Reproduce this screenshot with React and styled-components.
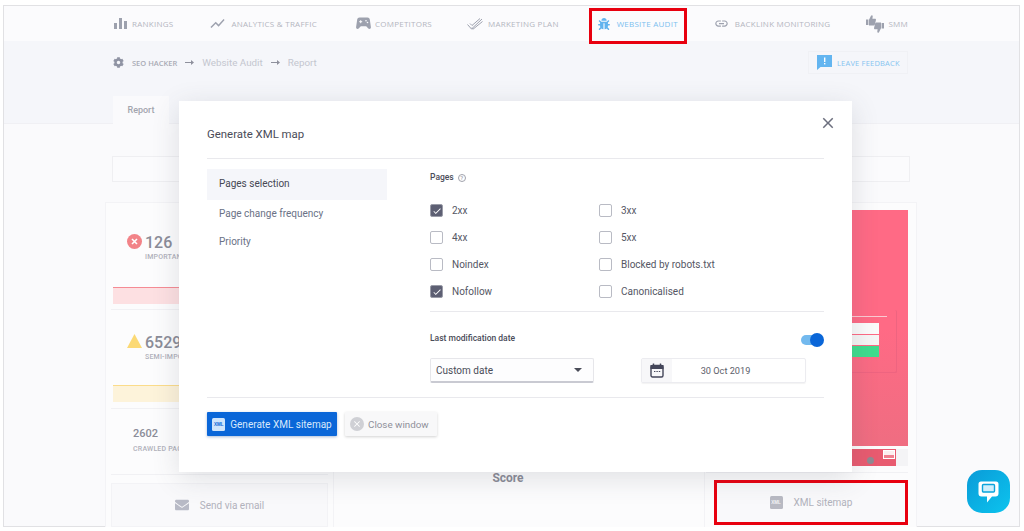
import React from "react";
import styled, { createGlobalStyle } from "styled-components";
import { FaBug, FaCog, FaEnvelope } from "react-icons/fa";
import { MdLink, MdShowChart, MdClose, MdCheck } from "react-icons/md";

const Global = createGlobalStyle`
  html, body { margin: 0; padding: 0; background: #fff; overflow: hidden; }
  * { box-sizing: border-box; }
  body { font-family: Roboto, "Liberation Sans", sans-serif; }
`;

const Page = styled.div`
  position: relative;
  width: 1024px;
  height: 531px;
  padding: 5px 4px 4px 3px;
  overflow: hidden;
  background: #fff;
`;
const Frame = styled.div`
  height: 100%;
  display: flex;
  flex-direction: column;
  border: 1px solid #e1e1e4;
  background: #fafafc;
`;
const Nav = styled.nav`
  height: 35px;
  flex: none;
  display: flex;
  align-items: center;
  padding-left: 110px;
  background: #fbfbfd;
`;
const NavItem = styled.div`
  position: relative;
  display: flex;
  align-items: center;
  margin-left: ${p => p.$ml ?? 0}px;
  gap: ${p => p.$gap ?? 5}px;
  font-family: "Open Sans", sans-serif;
  font-size: 8px;
  letter-spacing: 0.25px;
  color: ${p => (p.$active ? "#7cc0ef" : "#b4b6bf")};
  white-space: nowrap;
  svg { color: ${p => (p.$active ? "#62b3ee" : "#9da1ae")}; flex: none; }
`;
const RedBox = styled.div`
  position: absolute;
  z-index: 2;
  left: -9px;
  top: -10px;
  width: 98px;
  height: 36px;
  border: 3px solid #e8000f;
`;
const SubHeader = styled.div`
  height: 83px;
  flex: none;
  position: relative;
  background: #f5f6fa;
  border-bottom: 1px solid #f0f0f4;
  padding: 10px 111px 0 109px;
  display: flex;
  flex-direction: column;
`;
const CrumbRow = styled.div`
  height: 23px;
  display: flex;
  align-items: center;
  justify-content: space-between;
`;
const Crumbs = styled.div`
  display: flex;
  align-items: center;
  color: #c4c6cf;
  font-size: 9.8px;
  svg { flex: none; }
`;
const CrumbRoot = styled.span`
  margin-left: 8px;
  font-family: "Open Sans", sans-serif;
  font-size: 7.5px;
  font-weight: 600;
  color: #a9abb5;
`;
const ArrowWrap = styled.span`
  display: inline-flex;
  margin: 0 8px;
  color: #8e909c;
`;
const Feedback = styled.div`
  width: 100px;
  height: 23px;
  display: flex;
  align-items: center;
  gap: 5px;
  padding-left: 8px;
  border: 1px solid #f0f1f5;
  font-family: "Open Sans", sans-serif;
  font-size: 7.5px;
  letter-spacing: 0.2px;
  color: #86c4f0;
  white-space: nowrap;
`;
const Tab = styled.div`
  position: absolute;
  left: 109px;
  bottom: -1px;
  width: 56px;
  height: 28px;
  display: flex;
  align-items: center;
  justify-content: center;
  background: #fafafc;
  color: #a3a5ae;
  font-size: 9px;
  font-weight: 500;
`;
const Content = styled.div`
  flex: 1;
  min-height: 0;
  display: flex;
  flex-direction: column;
  padding: 32px 109px 0 108px;
`;
const SearchBox = styled.div`
  height: 26px;
  flex: none;
  border: 1px solid #efeff2;
  background: #fbfbfd;
`;
const Card = styled.div`
  flex: 1;
  margin: 20px -7px 0 -7px;
  display: grid;
  grid-template-columns: 228px 1fr 211px;
  background: #fcfcfd;
  border: 1px solid #f3f3f6;
  border-bottom: 0;
`;
const LeftCol = styled.div`
  display: flex;
  flex-direction: column;
  padding: 0 5px;
  border-right: 1px solid #f3f3f6;
`;
const Stat = styled.div`
  height: ${p => p.$h}px;
  flex: none;
  padding: ${p => p.$top}px 0 0 ${p => p.$left}px;
  border-bottom: 1px solid #f1f1f4;
`;
const StatHead = styled.div`
  display: flex;
  align-items: flex-start;
  gap: 3px;
`;
const Num = styled.div`
  font-size: ${p => p.$size ?? 16}px;
  line-height: ${p => p.$lh ?? 18}px;
  font-weight: 500;
  color: #8b8c98;
`;
const Label = styled.div`
  margin-top: ${p => p.$mt ?? 1}px;
  font-size: 7px;
  line-height: 9px;
  font-weight: 500;
  letter-spacing: 0.2px;
  color: #b0b1bb;
  white-space: nowrap;
`;
const Bar = styled.div`
  height: 17px;
  margin: ${p => p.$mt}px 0 0 ${p => -p.$left + 2}px;
  border-top: 1px solid ${p => p.$line};
  background: ${p => p.$fill};
`;
const Action = styled.div`
  margin-top: 8px;
  height: 44px;
  display: flex;
  align-items: center;
  justify-content: center;
  gap: 11px;
  color: #b1b2bb;
  font-size: 10px;
  border: 1px solid #f3f3f6;
  background: #f9f9fb;
  svg { color: #b8bac6; flex: none; }
`;
const MidCol = styled.div`
  display: flex;
  justify-content: center;
  padding: 268px 22px 0 0;
  color: #8b8c98;
  font-size: 12px;
  font-weight: 700;
  border-right: 1px solid #f3f3f6;
`;
const RightCol = styled.div`
  display: flex;
  flex-direction: column;
  padding: 7px 8px 0 1px;
`;
const Shot = styled.div`
  position: relative;
  height: 236px;
  flex: none;
  background: linear-gradient(180deg, #ff6a85 0%, #ff6a85 50%, #ef6d81 100%);
`;
const ShotForm = styled.div`
  position: absolute;
  left: 80px;
  right: 11px;
  top: 100px;
  height: 63px;
  border-right: 1px solid #ee6480;
  border-bottom: 1px solid #ee6480;
  border-radius: 2px;
`;
const ShotCaption = styled.div`
  position: absolute;
  left: 0;
  right: 9px;
  top: 6px;
  height: 1px;
  background: #fbc9d2;
`;
const ShotField = styled.div`
  position: absolute;
  left: 0;
  right: 17px;
  top: ${p => p.$top}px;
  height: ${p => p.$h}px;
  background: ${p => p.$c};
`;
const ThumbRow = styled.div`
  height: 17px;
  flex: none;
  margin-top: 3px;
  padding-right: 12px;
  background: #f4f4f6;
`;
const Thumb = styled.div`
  position: relative;
  height: 100%;
  background: #e85b70;
`;
const ThumbIcon = styled.div`
  position: absolute;
  right: 1px;
  top: 1px;
  width: 12px;
  height: 9px;
  background: linear-gradient(180deg, #fbeff0 55%, #f0808f 55%);
  border: 1px solid #fff;
`;
const ThumbDot = styled.div`
  position: absolute;
  right: 22px;
  bottom: 2px;
  width: 7px;
  height: 7px;
  border-radius: 50%;
  background: #8f8a92;
`;
const RightDivider = styled.div`
  height: 1px;
  flex: none;
  margin-top: 6px;
  background: #f1f1f4;
`;
const XmlBox = styled.div`
  position: relative;
  height: 45px;
  flex: none;
  margin: 7px 0 0 8px;
  display: flex;
  align-items: center;
  justify-content: center;
  gap: 11px;
  color: #b1b2bb;
  font-size: 10px;
  background: #f9f9fb;
  border: 3px solid #e8000f;
`;
const XmlTag = styled.span`
  display: inline-flex;
  align-items: center;
  justify-content: center;
  width: ${p => p.$w}px;
  height: ${p => p.$w}px;
  border-radius: 1.5px;
  background: ${p => p.$bg};
  color: ${p => p.$fg};
  font-family: "Liberation Sans", sans-serif;
  font-size: 4.5px;
  font-weight: 700;
  flex: none;
`;

const Modal = styled.div`
  position: absolute;
  left: 179px;
  top: 101px;
  width: 673px;
  height: 371px;
  padding: 0 28px;
  background: #fff;
  box-shadow: 0 6px 26px rgba(70, 72, 90, 0.16);
  display: flex;
  flex-direction: column;
`;
const CloseBtn = styled.div`
  position: absolute;
  right: 15px;
  top: 13px;
  color: #6c6f7e;
  line-height: 0;
`;
const Title = styled.div`
  height: 58px;
  flex: none;
  padding-top: 26px;
  font-size: 11.4px;
  line-height: 14px;
  color: #4a4c58;
  border-bottom: 1px solid #e9e9ed;
`;
const ModalBody = styled.div`
  height: 239px;
  flex: none;
  display: grid;
  grid-template-columns: 180px 1fr;
  column-gap: 43px;
  border-bottom: 1px solid #e9e9ed;
`;
const SideMenu = styled.div`
  padding-top: 10px;
`;
const SideItem = styled.div`
  height: ${p => p.$h}px;
  padding: 0 0 2px 12px;
  display: flex;
  align-items: center;
  font-size: 10px;
  color: ${p => (p.$active ? "#464854" : "#6a7186")};
  background: ${p => (p.$active ? "#f5f6fa" : "transparent")};
`;
const Pane = styled.div`
  display: flex;
  flex-direction: column;
`;
const SectionHead = styled.div`
  height: 38px;
  flex: none;
  padding-top: 13px;
  display: flex;
  align-items: flex-start;
  gap: 4px;
  font-size: 8.5px;
  line-height: 11px;
  font-weight: 500;
  color: #4a4c58;
`;
const Help = styled.span`
  width: 8px;
  height: 8px;
  margin-top: 1.5px;
  border: 1px solid #a0a2ac;
  border-radius: 50%;
  color: #a0a2ac;
  font-size: 6px;
  line-height: 6px;
  text-align: center;
`;
const CheckGrid = styled.div`
  display: grid;
  grid-template-columns: 169px 1fr;
  grid-auto-rows: 27px;
  height: 115px;
  flex: none;
  border-bottom: 1px solid #e9e9ed;
`;
const CheckRow = styled.label`
  display: flex;
  align-items: center;
  gap: 9px;
  font-size: 10px;
  color: #555764;
`;
const Box = styled.span`
  width: 13px;
  height: 13px;
  flex: none;
  display: inline-flex;
  align-items: center;
  justify-content: center;
  border: 1px solid ${p => (p.$on ? "#9a9ca8" : "#b9bbc4")};
  border-radius: 2px;
  background: ${p => (p.$on ? "#5d5f73" : "#fff")};
  color: #fff;
`;
const DateHead = styled.div`
  height: 46px;
  flex: none;
  position: relative;
  padding-top: 21px;
  font-size: 8.5px;
  line-height: 11px;
  font-weight: 500;
  color: #4a4c58;
`;
const Toggle = styled.div`
  position: absolute;
  right: 0;
  top: 21px;
  width: 23px;
  height: 14px;
  display: flex;
  align-items: center;
  justify-content: flex-end;
  &::before {
    content: "";
    position: absolute;
    left: 0;
    top: 2px;
    width: 20px;
    height: 10px;
    border-radius: 5px;
    background: #73b9ee;
  }
`;
const Knob = styled.span`
  position: relative;
  width: 14px;
  height: 14px;
  border-radius: 50%;
  background: #0a66d8;
`;
const DateRow = styled.div`
  display: flex;
  justify-content: space-between;
  width: 376px;
`;
const Select = styled.div`
  width: 164px;
  height: 25px;
  padding: 0 11px 0 5px;
  display: flex;
  align-items: center;
  justify-content: space-between;
  font-size: 10px;
  color: #4a4c58;
  border: 1px solid #e6e6ea;
  border-bottom: 2px solid #c9cad2;
  border-radius: 2px;
  background: #fdfdfe;
`;
const Caret = styled.span`
  width: 0;
  height: 0;
  border-left: 4px solid transparent;
  border-right: 4px solid transparent;
  border-top: 4px solid #4a4c58;
`;
const DateField = styled.div`
  width: 165px;
  height: 25px;
  display: flex;
  border: 1px solid #ececf0;
  border-radius: 2px;
  box-shadow: 0 1px 1px rgba(0,0,0,0.05);
  font-size: 9.2px;
  color: #5c5e6a;
`;
const DateIcon = styled.span`
  width: 30px;
  flex: none;
  display: flex;
  align-items: center;
  justify-content: center;
  background: #f7f7f9;
  color: #44465a;
`;
const DateValue = styled.span`
  flex: 1;
  display: flex;
  align-items: center;
  justify-content: center;
  padding-right: 26px;
`;
const Footer = styled.div`
  padding-top: 14px;
  display: flex;
  gap: 8px;
`;
const PrimaryBtn = styled.div`
  width: 130px;
  height: 24px;
  display: flex;
  align-items: center;
  justify-content: center;
  gap: 5px;
  background: #0a66d8;
  color: #d8e8fb;
  border-radius: 1px;
  font-size: 10px;
  box-shadow: 0 1px 3px rgba(10, 60, 140, 0.35);
  white-space: nowrap;
`;
const GhostBtn = styled.div`
  width: 92px;
  height: 24px;
  padding-left: 5px;
  display: flex;
  align-items: center;
  gap: 4px;
  background: #f8f8f9;
  color: #8f909a;
  border-radius: 1px;
  font-size: 9.8px;
  box-shadow: 0 1px 3px rgba(0, 0, 0, 0.18);
  white-space: nowrap;
`;
const CloseDot = styled.span`
  width: 14px;
  height: 14px;
  border-radius: 50%;
  background: #cfd0d5;
  color: #fff;
  display: inline-flex;
  align-items: center;
  justify-content: center;
`;
const Chat = styled.div`
  position: absolute;
  left: 967px;
  top: 470px;
  width: 43px;
  height: 43px;
  border-radius: 15px;
  background: linear-gradient(135deg, #0a9bd8, #0cc4ee);
  display: flex;
  align-items: center;
  justify-content: center;
`;

const BarsIcon = () => (
  <svg width="13" height="13" viewBox="0 0 13 13" fill="currentColor">
    <rect x="0" y="6" width="3" height="6" />
    <rect x="5" y="1" width="3" height="11" />
    <rect x="10" y="4" width="3" height="8" />
  </svg>
);
const GamepadIcon = () => (
  <svg width="15" height="13" viewBox="0 0 15 13">
    <path fill="currentColor" d="M3.5 0.5h8c1.3 0 2 .8 2.3 2l1.1 7.6c.2 1.6-1.4 2.5-2.6 1.4L10.2 9.3H4.8l-2.1 2.2C1.5 12.6-.1 11.7.1 10.1L1.2 2.5C1.5 1.3 2.2.5 3.5.5z" />
    <path stroke="#fbfbfd" strokeWidth="1" d="M3.2 4.7h3M4.7 3.2v3" />
    <circle cx="10" cy="3.8" r="0.8" fill="#fbfbfd" />
    <circle cx="11.5" cy="5.5" r="0.8" fill="#fbfbfd" />
  </svg>
);
const ChecksIcon = () => (
  <svg width="16" height="12" viewBox="0 0 16 12" fill="none" stroke="currentColor" strokeWidth="1">
    <path d="M0.5 6.5l4 4.5L15 1" />
    <path d="M3 5.5l2 2L13 0.5" />
    <path d="M4.5 10l1.5 1.2L15.5 3.5" />
  </svg>
);
const ThumbsIcon = () => (
  <svg width="18" height="18" viewBox="0 0 18 18" fill="currentColor">
    <path d="M0 4.5h2.4v5.6H0zM3 4.8L5 .8c.7-1 1.9-.6 1.7.7l-.3 2.3H9c.8 0 1.1.7.9 1.4L8.800 9.800c-.2.5-.5.8-1 .8H3z" />
    <path d="M18 13.500h-2.400V7.900H18zM15 13.200l-2 4c-.7 1-1.900.6-1.700-.7l.3-2.300H9c-.8 0-1.100-.7-.9-1.400l1.100-4.600c.2-.5.5-.8 1-.8H15z" />
  </svg>
);
const ArrowIcon = () => (
  <svg width="9" height="7" viewBox="0 0 9 7">
    <path d="M0 3.500h7" stroke="currentColor" strokeWidth="1" fill="none" />
    <path d="M6 1l3 2.500L6 6z" fill="currentColor" />
  </svg>
);
const FeedbackIcon = () => (
  <svg width="15" height="15" viewBox="0 0 15 15">
    <path d="M0 0h15v12H3.500L0 15z" fill="#63b5f0" />
    <rect x="7" y="2.500" width="1.400" height="4.500" fill="#fff" />
    <rect x="7" y="8" width="1.400" height="1.400" fill="#fff" />
  </svg>
);
const ErrorIcon = () => (
  <svg width="15" height="15" viewBox="0 0 15 15">
    <circle cx="7.500" cy="7.500" r="7.500" fill="#f28388" />
    <path d="M5 5l5 5M10 5l-5 5" stroke="#fff" strokeWidth="1.600" />
  </svg>
);
const WarnIcon = () => (
  <svg width="15" height="14" viewBox="0 0 15 14">
    <path d="M7.500 0L15 14H0z" fill="#fbd975" />
  </svg>
);
const CalendarIcon = () => (
  <svg width="14" height="15" viewBox="0 0 14 15" fill="none" stroke="currentColor">
    <rect x="1" y="2.500" width="12" height="11.500" rx="1.500" strokeWidth="1.400" />
    <rect x="1" y="2.500" width="12" height="3" fill="currentColor" strokeWidth="1" />
    <path d="M3.500 0.500v2M10.500 0.500v2" strokeWidth="1.400" />
    <path d="M4 8.500h1.400M6.400 8.500h1.400M8.800 8.500h1.400" strokeWidth="1.200" />
  </svg>
);
const ChatIcon = () => (
  <svg width="21" height="22" viewBox="0 0 21 22">
    <path d="M3 .5h15A2.500 2.500 0 0 1 20.500 3v9.500a3 3 0 0 1-3 3H14l-5 6v-6H3.500A3 3 0 0 1 .5 12.500V3A2.500 2.500 0 0 1 3 .5z" fill="#fff" />
    <rect x="4.500" y="3.500" width="12" height="7.500" rx="1" fill="#cfeefb" stroke="#0aa4dc" strokeWidth="1.400" />
  </svg>
);

const options = [
  ["2xx", true], ["3xx", false],
  ["4xx", false], ["5xx", false],
  ["Noindex", false], ["Blocked by robots.txt", false],
  ["Nofollow", true], ["Canonicalised", false],
];

export default function App() {
  return (
    <>
      <Global />
      <Page>
        <Frame>
          <Nav>
            <NavItem $gap={5}><BarsIcon />RANKINGS</NavItem>
            <NavItem $ml={36} $gap={5}><MdShowChart size={17} />ANALYTICS &amp; TRAFFIC</NavItem>
            <NavItem $ml={39} $gap={4}><GamepadIcon />COMPETITORS</NavItem>
            <NavItem $ml={35}><ChecksIcon />MARKETING PLAN</NavItem>
            <NavItem $ml={39} $active $gap={7}><FaBug size={12} />WEBSITE AUDIT<RedBox /></NavItem>
            <NavItem $ml={36} $gap={6}><MdLink size={15} />BACKLINK MONITORING</NavItem>
            <NavItem $ml={36} $gap={4}><ThumbsIcon />SMM</NavItem>
          </Nav>
          <SubHeader>
            <CrumbRow>
              <Crumbs>
                <FaCog size={11} color="#8f93a3" />
                <CrumbRoot>SEO HACKER</CrumbRoot>
                <ArrowWrap><ArrowIcon /></ArrowWrap>
                Website Audit
                <ArrowWrap><ArrowIcon /></ArrowWrap>
                Report
              </Crumbs>
              <Feedback><FeedbackIcon />LEAVE FEEDBACK</Feedback>
            </CrumbRow>
            <Tab>Report</Tab>
          </SubHeader>
          <Content>
            <SearchBox />
            <Card>
              <LeftCol>
                <Stat $h={107} $top={31} $left={16}>
                  <StatHead>
                    <ErrorIcon />
                    <div>
                      <Num>126</Num>
                      <Label>IMPORTANT</Label>
                    </div>
                  </StatHead>
                  <Bar $mt={25} $left={16} $line="#f58b94" $fill="#fde0e2" />
                </Stat>
                <Stat $h={99} $top={24} $left={16}>
                  <StatHead>
                    <WarnIcon />
                    <div>
                      <Num>6529</Num>
                      <Label>SEMI-IMPORTANT</Label>
                    </div>
                  </StatHead>
                  <Bar $mt={23} $left={16} $line="#fbdc8a" $fill="#fdf3da" />
                </Stat>
                <Stat $h={66} $top={18} $left={22}>
                  <Num $size={11} $lh={14}>2602</Num>
                  <Label $mt={4}>CRAWLED PAGES</Label>
                </Stat>
                <Action><FaEnvelope size={14} />Send via email</Action>
              </LeftCol>
              <MidCol>Score</MidCol>
              <RightCol>
                <Shot>
                  <ShotForm>
                    <ShotCaption />
                    <ShotField $top={13} $h={11} $c="#fbfbfb" />
                    <ShotField $top={25} $h={10} $c="#f6f6f6" />
                    <ShotField $top={36} $h={11} $c="#3fdc8e" />
                  </ShotForm>
                </Shot>
                <ThumbRow>
                  <Thumb><ThumbDot /><ThumbIcon /></Thumb>
                </ThumbRow>
                <RightDivider />
                <XmlBox>
                  <XmlTag $w={13} $bg="#b9bac3" $fg="#f5f5f7">XML</XmlTag>
                  XML sitemap
                </XmlBox>
              </RightCol>
            </Card>
          </Content>
        </Frame>

        <Modal>
          <CloseBtn><MdClose size={18} /></CloseBtn>
          <Title>Generate XML map</Title>
          <ModalBody>
            <SideMenu>
              <SideItem $h={31} $active>Pages selection</SideItem>
              <SideItem $h={29}>Page change frequency</SideItem>
              <SideItem $h={27}>Priority</SideItem>
            </SideMenu>
            <Pane>
              <SectionHead>Pages <Help>?</Help></SectionHead>
              <CheckGrid>
                {options.map(([name, on]) => (
                  <CheckRow key={name}>
                    <Box $on={on}>{on && <MdCheck size={10} />}</Box>
                    {name}
                  </CheckRow>
                ))}
              </CheckGrid>
              <DateHead>
                Last modification date
                <Toggle><Knob /></Toggle>
              </DateHead>
              <DateRow>
                <Select>Custom date<Caret /></Select>
                <DateField>
                  <DateIcon><CalendarIcon /></DateIcon>
                  <DateValue>30 Oct 2019</DateValue>
                </DateField>
              </DateRow>
            </Pane>
          </ModalBody>
          <Footer>
            <PrimaryBtn><XmlTag $w={13} $bg="#cfe4fb" $fg="#0a66d8">XML</XmlTag>Generate XML sitemap</PrimaryBtn>
            <GhostBtn><CloseDot><MdClose size={10} /></CloseDot>Close window</GhostBtn>
          </Footer>
        </Modal>

        <Chat><ChatIcon /></Chat>
      </Page>
    </>
  );
}
